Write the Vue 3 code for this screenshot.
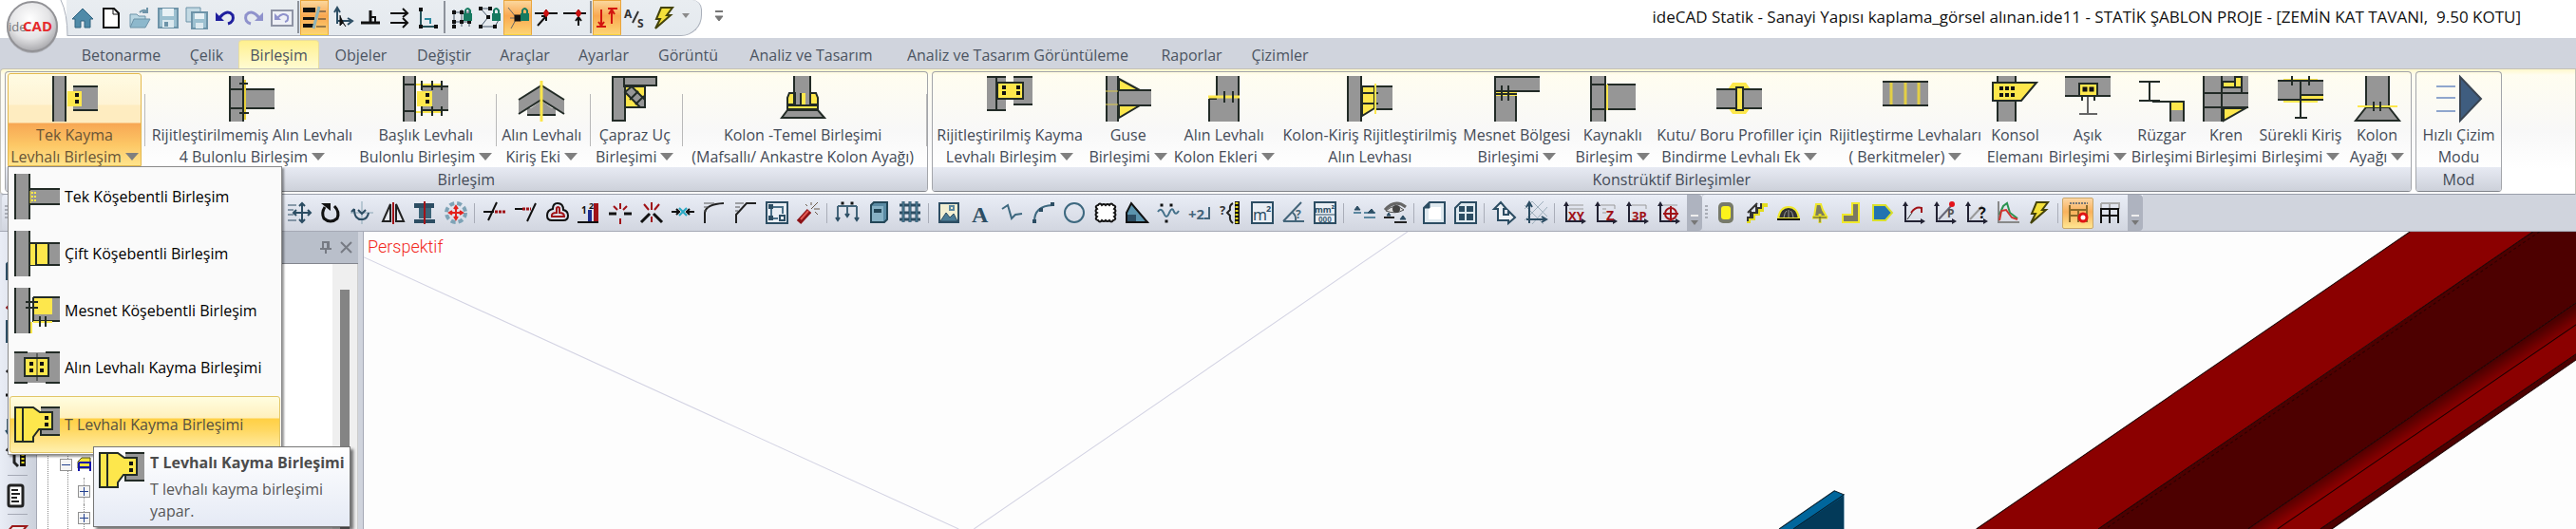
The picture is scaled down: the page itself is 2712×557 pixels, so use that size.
<script setup>
const G = '#969696'
const Y = '#fde74c'
const K = '#222b26'

const rect = (x, y, w, h, f) => `<rect x="${x}" y="${y}" width="${w}" height="${h}" fill="${f}"/>`
const line = (d, c = K, w = 2) => `<path d="${d}" stroke="${c}" stroke-width="${w}" fill="none"/>`
const shape = (d, f, c = K, w = 2) => `<path d="${d}" fill="${f}" stroke="${c}" stroke-width="${w}"/>`
const dots = (pts, s = 4) => pts.map(([x, y]) => rect(x - s / 2, y - s / 2, s, s, '#111')).join('')
const column = (w) => rect(0, 0, w, 48, G) + line(`M1 0V48M${w - 1} 0V48`)

const art = {
  tekKayma: column(15) + rect(22, 10, 26, 27, G) + line('M22 11H48M22 36H48') + rect(16, 16, 15, 16, Y) + dots([[26, 20], [26, 27]]),
  dortBulon: column(16) + rect(16, 14, 32, 20, G) + line('M0 14H48M0 34H48') + line('M17 4V46', '#e6cf3c') + line('M11 8H20M11 39H21'),
  baslik: column(14) + line('M0 9H14M0 37H14') + rect(20, 10, 28, 27, G) + line('M14 9H42M14 38H42', Y) + line('M20 11H48M20 36H48M20 5V15M31 5V15M41 5V15M20 32V42M31 32V42M41 32V42') + rect(15, 16, 16, 16, Y) + dots([[26, 20], [26, 27]]),
  kirisEki: rect(9, 34, 30, 7, G) + `<path d="M0 25L24 10L48 25V40L24 25L0 40Z" fill="${G}"/><path d="M10 36L24 26L38 36Z" fill="${G}"/>` + line('M0 25L24 10L48 25M0 40L24 25L48 40M9 41H39') + line('M24 5V48', Y, 3),
  capraz: shape('M1 1H47V10H14V47H1Z', G) + line('M13 1V12') + shape('M14 11H35V33H14Z', Y) + shape('M14 17L21 11L35 25V33H30Z', G) + line('M19 25L28 16M25 30L34 21'),
  temel: rect(14, 0, 19, 31, G) + shape('M8 30V23L10 18H16V30ZM32 30V18H38L40 23V30Z', Y) + rect(22, 18, 5, 12, Y) + line('M15 0V30M32 0V30M22 18V30') + shape('M8 31H40V35H8Z', Y) + shape('M8 36H40L47 44H2Z', G),
  rijitKayma: rect(0, 0, 20, 37, G) + rect(28, 0, 20, 31, G) + line('M0 1H20M0 36H20M28 1H48M28 30H48M10 0V36') + shape('M11 7H38V24H11Z', Y) + dots([[18, 12], [33, 12], [18, 18], [33, 18]]),
  guse: rect(14, 15, 34, 17, G) + column(14) + shape('M14 3L36 15H14ZM14 31H36L14 44Z', Y) + line('M14 15H48M14 31H48') + line('M0 16H13M0 30H13', '#d9c64a', 1),
  kolonEki: rect(16, 0, 24, 21, G) + rect(8, 23, 32, 25, G) + line('M16 0V21M39 0V48M8 24V48M8 24H16') + line('M7 22H40', Y, 3) + line('M24 16V28M33 16V28'),
  kolonKiris: column(16) + rect(29, 11, 19, 25, G) + shape('M16 11H29V34L16 42Z', Y) + line('M29 11H48M29 35H48M16 18H33M16 29H33') + line('M30 8V40', Y),
  mesnet: rect(0, 0, 48, 16, G) + rect(0, 21, 24, 27, G) + rect(0, 16, 24, 5, Y) + line('M0 1H48M0 16H48M1 0V48M23 21V48M0 19H24M8 10V26M15 10V26'),
  kaynakli: column(17) + rect(18, 9, 30, 27, G) + line('M0 9H16M0 35H16M18 9H48M18 35H48') + line('M18 9V36', Y),
  kutu: `<path d="M12 14L17 7H31L36 14V33L31 40H17L12 33Z" fill="${Y}"/>` + rect(0, 13, 48, 21, G) + line('M0 14H48M0 34H48') + shape('M21 12H28V36H21Z', Y),
  berkitme: rect(0, 6, 48, 25, G) + line('M9 6V30M24 6V30M38 6V30', '#e3cf45', 3) + line('M0 6H48M0 31H48'),
  konsol: rect(6, 0, 19, 48, G) + line('M6 0V48M25 0V48') + shape('M1 7H47L31 26H1Z', Y) + dots([[10, 13], [16, 13], [22, 13], [10, 20], [16, 20], [22, 20]]),
  asik: rect(0, 1, 48, 20, G) + line('M0 1H48M0 21H48') + shape('M15 8H34V21H15Z', Y) + dots([[21, 14], [28, 14]], 5) + line('M18 21V26M31 21V26') + line('M24 22V40M15 40H34', '#666', 2),
  ruzgar: line('M0 6H22M11 6V26M0 26H22M14 27H48') + rect(33, 28, 14, 8, Y) + rect(33, 36, 14, 12, G) + line('M33 27V48M47 27V48'),
  kren: column(21) + rect(21, 0, 27, 33, G) + shape('M21 6H34V12H21Z M34 1H41V12H34Z', Y) + shape('M22 34H45L22 47Z', Y) + line('M0 18H48M0 33H48M41 0V18M1 0V48'),
  surekli: rect(0, 5, 48, 21, G) + rect(24, 20, 24, 5, Y) + line('M6 4H42M6 27H42M24 26V34', Y) + line('M0 5H48M0 25H48M24 20H48M15 0V10M33 0V10M24 5V44M18 44H31'),
  kolonAyagi: rect(12, 0, 24, 32, G) + shape('M12 33H36L47 47H1Z', G) + line('M12 0V32M36 0V32') + line('M3 32H45', Y) + line('M20 27V37M27 27V37'),
  hizli: line('M0 11H20M0 23H20M0 37H20', '#8fa6cd') + shape('M25 1L47 24L25 47Z', '#3f5d7f', '#3a4552'),
  tekKose: column(17) + rect(17, 16, 31, 17, G) + line('M17 16H48M17 32H48') + `<path d="M19 19V30M22 19V30" stroke="${Y}" stroke-width="2" stroke-dasharray="2 2"/>` + line('M17 18V31', Y, 1),
  ciftKose: rect(17, 13, 31, 24, G) + column(17) + line('M17 13H48M17 36H48') + rect(17, 14, 6, 22, Y) + shape('M23 13H36V36H23Z', Y),
  mesnetKose: column(17) + rect(19, 10, 29, 26, G) + rect(19, 10, 21, 18, Y) + line('M20 10H48M20 10V35H48') + line('M18 36V48M20 36H40', Y) + line('M12 15H25M12 21H25M27 30V41M33 30V41'),
  alin: rect(0, 8, 48, 32, G) + line('M0 8H14M33 8H48M0 40H14M33 40H48') + shape('M11 14H36V33H11Z', Y) + line('M24 9V38', K, 1) + dots([[18, 20], [18, 27], [29, 20], [29, 27]]),
  tLevha: rect(28, 5, 20, 31, G) + line('M28 6H48M28 35H48M28 30V36') + shape('M1 6H20L27 11H40V29H26L20 37V42H1Z', Y) + line('M9 6V42') + dots([[34, 17], [34, 24]]),
}

const N = '#2c4d63'
const B = '#6d93a8'
const R = '#a01217'
const axes = line('M3 2V21H22', '#223', 2) + `<path d="M0 5L3 0L6 5ZM19 18L24 21L19 24Z" fill="#223"/>`
const letter = (t, x, y, s, c) => `<text x="${x}" y="${y}" font-size="${s}" font-weight="700" fill="${c}" font-family="Noto Sans, sans-serif">${t}</text>`
const lock = rect(15, 7, 9, 8, '#167a60') + line('M17 7V4Q19 0 22 4V7', '#167a60')

const small = {
  home: shape('M1 13L12 2L23 13H20V22H14V15H10V22H4V13Z', '#4f8aa8', '#30627f', 1),
  page: shape('M4 2H15L20 7V22H4Z', '#fff', '#111') + line('M14 2V8H20', '#111', 1),
  open: shape('M2 8H9L11 10H18V21H2Z', '#b9d6e2', B, 1) + shape('M6 13H23L18 22H2Z', '#8db8cc', B, 1) + line('M12 6Q16 2 20 5M20 1V6H15', B),
  save: shape('M2 2H22V22H2Z', '#9cc0d0', B, 2) + rect(6, 2, 12, 8, '#e8f1f5') + rect(6, 14, 12, 8, '#dce9ef') + rect(8, 16, 4, 5, B),
  saveAll: shape('M1 1H16V16H1Z', '#c4dae4', B, 1) + shape('M7 6H23V23H7Z', '#9cc0d0', B, 2) + rect(10, 7, 10, 6, '#e8f1f5') + rect(11, 17, 8, 6, '#dce9ef'),
  undo: line('M6 12Q14 2 20 9Q22 16 15 18', '#1f1f9e', 3) + `<path d="M2 6V15H11Z" fill="#1f1f9e"/>`,
  redo: line('M18 12Q10 2 4 9Q2 16 9 18', '#8f92cc', 3) + `<path d="M22 6V15H13Z" fill="#8f92cc"/>`,
  undoBox: shape('M1 4H23V20H1Z', '#eef0f6', '#8e93a4', 2) + line('M7 12Q13 5 18 10Q19 15 15 16', '#8f92cc', 2) + `<path d="M4 7V14H11Z" fill="#8f92cc"/>`,
  bars: rect(0, 1, 13, 5, '#111') + rect(0, 11, 12, 3, '#111') + rect(0, 18, 12, 4, '#111') + line('M16 5H24M16 13H24M14 21H24', '#333', 1) + line('M17 0L11 23', '#8fb3b8', 3),
  move3d: line('M6 18V3M6 15H20M3 6L6 1L9 6', N, 2) + shape('M9 9V20L12 17L15 21', '#111', '#111', 1) + line('M17 12L22 15L17 19', N),
  perp: line('M1 17H21M11 17V4', '#111', 3) + line('M11 11H16V17', '#111', 2),
  parallel: line('M2 7H20M2 17H20M15 2L20 7L15 11M15 12L20 17L15 22', '#111', 2),
  ortho: line('M4 2V21H22', '#27545c', 2) + line('M8 13H14V18', '#2d8aa0') + dots([[4, 3], [4, 21], [20, 21]]),
  gridLock: line('M3 6H22M3 16H22M5 3V21M13 3V21M21 3V21', '#456', 1) + dots([[5, 6], [13, 6], [5, 16], [13, 16], [21, 16], [5, 21]]) + lock,
  nodeLock: line('M3 2L13 2M3 2L11 11L3 21H18L22 14', '#456', 1) + dots([[3, 2], [13, 2], [11, 11], [3, 21], [18, 21]]) + lock,
  snapLock: line('M2 1L11 12L5 23M4 12H20', '#666', 1) + dots([[12, 12]], 7) + lock,
  snapEnd: line('M0 7H24M3 20L12 10M7 10H12V15', '#111', 2) + shape('M9 7L12 3L15 7L12 11Z', '#d01010', '#a00', 1),
  snapMid: line('M0 7H24M16 20V12M13 15L16 11L19 15', '#111', 2) + shape('M13 7L16 3L19 7L16 11Z', '#d01010', '#a00', 1),
  levels: line('M6 3V20M1 21H11M17 4V18M13 2H23M3 16L6 20L9 16M14 8L17 3L20 8', '#d3150f', 2),
  as: letter('A', 0, 12, 12, '#333') + letter('S', 14, 22, 12, '#333') + line('M9 17L15 5', '#333'),
  bolt: shape('M9 1H21L15 9H19L3 23L8 13H4Z', '#f4e03a', '#44430a', 2),
  moveLines: line('M0 4H9M0 9H6M0 14H6M0 20H9', N, 1) + line('M15 3V21M7 12H23M12 5L15 2L18 5M12 19L15 22L18 19M9 9L6 12L9 15M21 9L24 12L21 15', N, 2),
  rotate: line('M6 6Q2 12 5 18Q12 24 19 18Q22 11 16 5', '#111', 3) + `<path d="M2 2H12V10Z" fill="#111"/>`,
  rotateCopy: line('M0 12H24M12 0V24', '#8ba7b6', 1) + line('M4 8Q4 20 13 19Q18 18 19 12M4 8L1 11M8 9L12 13L16 9', N, 2),
  mirror: shape('M9 3V21H1ZM15 3V21H23Z', '#e8eaf0', '#222') + line('M12 1V24', R, 2),
  section: rect(1, 2, 21, 5, N) + rect(6, 7, 13, 11, '#3c6478') + rect(1, 19, 22, 4, N) + line('M12 0V24', R, 2),
  radial: `<circle cx="12" cy="12" r="10" fill="none" stroke="#7ea3b6" stroke-width="4" stroke-dasharray="5 3"/>` + line('M12 6V18M6 12H18M10 8L12 5L14 8M10 16L12 19L14 16M8 10L5 12L8 14M16 10L19 12L16 14', '#e3221d', 2),
  trim: line('M0 11H11M5 20L14 1', '#111', 2) + `<path d="M12 11H24" stroke="${R}" stroke-width="3" stroke-dasharray="3 1"/>`,
  extend: line('M0 8H8M13 21L22 2', '#111', 2) + `<path d="M8 8H17" stroke="${R}" stroke-width="3" stroke-dasharray="3 1"/>`,
  offset: line('M7 8Q7 2 12 2Q18 2 18 9Q23 10 23 15Q23 20 18 20H6Q1 20 1 15Q1 9 7 8Z', '#111', 2) + line('M11 12V7Q12 5 14 7V12Q19 12 19 16H6Q5 12 11 12Z', R, 2),
  order: letter('1', 4, 13, 10, '#111') + letter('2', 12, 8, 9, '#111') + rect(11, 9, 4, 12, '#1d2c8e') + rect(17, 2, 5, 19, R) + rect(0, 21, 22, 2, '#111'),
  breakH: line('M0 13H8M16 13H24', '#111', 3) + line('M12 2V8M12 18V24M5 5L9 9M19 5L15 9', R, 2),
  breakX: line('M1 22L10 13M23 22L14 13', '#111', 3) + line('M12 1V9M4 3L9 9M20 3L15 9M12 16V22', R, 2),
  join: line('M0 11H9M15 11H24M5 8L8 11L5 14M19 8L16 11L19 14', '#111', 2) + line('M8 7L16 15M16 7L8 15', '#28a9c4', 2),
  fillet: line('M2 23V12Q3 3 22 2', '#222', 2) + line('M1 2H12M1 6H6M1 10H4', '#555', 1),
  chamfer: line('M2 23V14L13 2H23', '#222', 2) + line('M1 2H10M1 6H6M1 10H4', '#555', 1),
  frame: shape('M1 1H23V23H1Z', '#e9eef4', N) + line('M6 6H18V13M6 6V18H13', '#4b7088', 2) + rect(3, 3, 5, 5, N) + rect(3, 15, 5, 5, N) + line('M15 15H20V20H15Z', N, 2),
  wand: line('M2 22L13 10', '#8c1216', 6) + line('M4 19L12 10', '#e35a54', 2) + line('M15 8L22 1M18 8H24M15 4V1M19 11L22 14M11 5L9 3', '#6a5a4a', 1),
  dims: line('M2 5H22M2 5V20M12 5V16M22 5V20', '#44657a', 2) + dots([[7, 2], [17, 2]], 3) + line('M0 17L2 20L4 17M10 13L12 16L14 13M20 17L22 20L24 17', N, 2),
  book: shape('M4 4L7 1H21V19L18 22H4Z', '#5a8ba4', '#234657') + rect(5, 5, 12, 16, '#86b1c5') + rect(7, 8, 8, 4, '#234657'),
  lattice: line('M5 0V22M12 0V22M19 0V22M1 4H23M1 12H23M1 19H23', N, 3) + line('M5 0V22M12 0V22M19 0V22', '#5b93ae', 1),
  image: shape('M2 2H22V22H2Z', '#f2efd2', N) + shape('M3 21L9 12L13 17L17 13L21 21Z', '#4b7c95', N, 1) + line('M13 5H17V9H13Z', '#5a87a0', 2),
  textA: `<text x="3" y="22" font-size="24" font-weight="700" fill="${N}" font-family="Liberation Serif, serif">A</text>`,
  poly: line('M2 8L8 4L12 18L16 14L23 13', '#3d687f', 2),
  arc: line('M3 21Q3 5 22 4', '#3d687f', 2) + shape('M1 19H5V23H1ZM20 1H24V5H20ZM8 7H12V11H8Z', N, N, 0),
  circle: `<circle cx="12" cy="12" r="10" fill="none" stroke="#3d687f" stroke-width="2"/>`,
  cloud: `<rect x="3" y="5" width="18" height="14" rx="2" fill="#fff"/><path d="M3 8Q0 5 4 4Q6 1 8 4Q10 2 12 4Q14 2 16 4Q18 1 20 4Q24 5 21 8Q24 10 21 12Q24 14 21 16Q24 19 20 20Q18 23 16 20Q14 22 12 20Q10 22 8 20Q6 23 4 20Q0 19 3 16Q0 14 3 12Q0 10 3 8Z" fill="#fff" stroke="#111" stroke-width="2"/>`,
  ramp: shape('M1 12L6 2L23 22H1Z', '#5b94ae', '#111') + rect(2, 14, 9, 7, N) + line('M1 22H24', '#111', 2),
  spline: line('M1 11Q4 6 7 12Q10 20 13 12Q16 5 18 11Q20 15 23 10', '#44708a', 2) + dots([[5, 4], [15, 4], [10, 21]], 3),
  plus2: letter('+2', 0, 19, 15, '#44657a') + line('M22 6V18H17', '#44657a', 2),
  scaleQ: letter('?', 0, 14, 13, '#333') + line('M14 2Q10 4 11 9L8 12L11 15Q10 20 14 23', '#222', 2) + rect(16, 0, 5, 24, '#111') + `<path d="M18 1V23" stroke="#e8d921" stroke-width="3" stroke-dasharray="2 2"/>`,
  m2: shape('M1 1H23V23H1Z', '#e9eef4', N) + `<text x="2" y="20" font-size="16" fill="${N}" font-family="Noto Sans, sans-serif">m</text>` + letter('2', 16, 11, 9, N),
  angle: line('M1 21H23M1 21L20 1M11 12Q15 15 14 21', '#44657a', 2) + letter('?', 14, 18, 12, '#44657a'),
  mm2: shape('M1 1H23V23H1Z', '#e9eef4', N) + letter('mm²', 1, 12, 9, N) + line('M1 14H23', N, 1) + letter('000', 5, 22, 8, '#44657a'),
  level: line('M1 12H9M12 17H24M12 12H16M16 12H24', '#5b87a0', 2) + shape('M2 9L5 5L8 9ZM16 12L20 8L23 12Z', N, N, 1),
  eye: line('M1 9Q12 -3 23 6', '#666', 3) + shape('M2 10Q12 1 21 9Q12 14 2 10Z', '#ddd', '#555', 1) + `<circle cx="13" cy="8" r="4" fill="#444"/>` + line('M0 17H11M11 22H24', '#222', 2) + shape('M3 15L5 12L7 15ZM17 19L20 15L23 19Z', N, N, 1),
  sheet: shape('M7 1H23V23H1V7Z', '#dfe9ef', N) + rect(6, 6, 13, 13, '#fff') + shape('M1 7L7 1V7Z', N, N, 1),
  sheets: shape('M7 1H23V23H1V7Z', '#dfe9ef', N) + rect(5, 5, 6, 6, N) + rect(13, 5, 7, 6, N) + rect(5, 13, 6, 7, N) + rect(13, 13, 7, 7, N),
  upRight: shape('M5 21V8H1L8 1L14 8H11V14H16V10L23 17L16 23V20H5Z', '#eef2f6', N),
  hatch: line('M0 8L8 0M0 20L20 0M8 24L24 6M0 4L20 24M8 0L24 16', '#9fb0bc', 1) + line('M5 23V3M2 19H22M2 6L5 1L8 6M18 16L23 19L18 22', N, 2),
  xy: axes + line('M6 4H21M6 8H21', '#999', 1) + letter('XY', 5, 20, 13, R),
  z: axes + line('M6 4H21V8M8 8H12M8 12H12', '#999', 1) + letter('Z', 12, 20, 14, R),
  p3: axes + line('M6 4H21V8', '#999', 1) + letter('3P', 6, 20, 13, R),
  target: axes + line('M6 4H21', '#999', 1) + `<circle cx="14" cy="13" r="6" fill="none" stroke="${R}" stroke-width="2"/>` + line('M14 5V21M6 13H22', R, 2),
  col: `<rect x="4" y="1" width="16" height="22" rx="5" fill="#777a6a"/><rect x="7" y="5" width="10" height="14" rx="3" fill="#fbf31c"/>`,
  stair: line('M3 23V18H8V13H13V9H17V4H23', '#e3dc1d', 4) + line('M2 21V17H7V12H12V7H16V2M5 16V8M11 11V4M2 12L12 2', '#333', 2),
  dome: `<path d="M1 18Q3 6 12 6Q21 6 23 18Z" fill="#333" stroke="#f0e92a" stroke-width="2"/>` + line('M7 17Q8 11 10 10M12 9V17M17 17Q16 11 14 10', '#999', 1) + line('M0 19H24', '#111', 2),
  bell: `<path d="M6 16L8 3H13L15 9L19 16Z" fill="#7c7c60" stroke="#efe82a" stroke-width="2"/>` + line('M4 17H20M12 13V23', '#e3dc1d', 3) + line('M5 17H19M12 16V22', '#555', 1),
  ell: shape('M13 2H20V22H3V14H13Z', '#7b7963', '#f0e92a', 2),
  tag: shape('M2 4H15L22 12L15 20H2Z', '#2273b0', '#d9e02c', 2),
  chart1: axes + line('M5 19L10 12', '#333', 1) + line('M9 12Q14 5 20 7V12', R, 2),
  chartP: axes + line('M5 19L18 5', '#667', 2) + `<circle cx="19" cy="3" r="3" fill="#e3131b"/>` + letter('P', 14, 17, 12, '#555'),
  chartQ: axes + line('M5 19L18 5', '#999', 2) + letter('?', 14, 18, 16, '#111'),
  plot: line('M2 0V22H24', '#888', 2) + line('M3 14L7 5L11 2L14 12L22 18', '#2b9350', 2) + line('M3 20L5 10L10 9L16 17L22 19', '#d2322e', 2),
  frameStop: `<path d="M3 2H22" stroke="#777" stroke-width="2" stroke-dasharray="2 1"/>` + line('M3 4V22M12 8V22M21 4V22M3 9H21M3 15H21', '#8b6a2a', 2) + `<circle cx="17" cy="17" r="4" fill="#fff" stroke="#e01414" stroke-width="3"/>`,
  frameGrid: line('M3 2H22V8M3 2V8M12 2V8', '#aaa', 2) + line('M3 8V23M12 8V23M21 8V23M2 8H22M2 15H22', '#111', 2),
  magnet: line('M1 6Q6 -2 9 8V18L13 22', '#222', 3) + rect(15, 0, 6, 22, '#111') + `<path d="M18 1V21" stroke="#e8d921" stroke-width="3" stroke-dasharray="2 2"/>`,
  doc: `<rect x="3" y="1" width="15" height="22" rx="2" fill="#fff" stroke="#222" stroke-width="3"/>` + line('M6 6H13M6 10H15M6 14H12M6 18H14', '#222', 2),
  plate: shape('M7 3H22L16 10H1Z', '#eee', '#9b1a1a', 2) + shape('M6 20L12 12L16 20Z', '#4b7c95', N, 1),
}

const quick = ['home', 'page', 'open', 'save', 'saveAll', 'undo', 'redo', 'undoBox', '|', '*bars', 'move3d', 'perp', 'parallel', 'ortho', '|', 'gridLock', 'nodeLock', '*snapLock', 'snapEnd', 'snapMid', '|', '*levels', 'as', 'bolt']
const tools = ['moveLines', 'rotate', 'rotateCopy', 'mirror', 'section', 'radial', '|', 'trim', 'extend', 'offset', 'order', 'breakH', 'breakX', 'join', 'fillet', 'chamfer', 'frame', 'wand', '|', 'dims', 'book', 'lattice', '|', 'image', 'textA', 'poly', 'arc', 'circle', 'cloud', 'ramp', 'spline', 'plus2', 'scaleQ', 'm2', 'angle', 'mm2', '|', 'level', 'eye', '|', 'sheet', 'sheets', '|', 'upRight', 'hatch', '|', 'xy', 'z', 'p3', 'target']
const tools2 = ['col', 'stair', 'dome', 'bell', 'ell', 'tag', 'chart1', 'chartP', 'chartQ', 'plot', 'bolt', '|', '*frameStop', 'frameGrid']
const side = ['sheet', 'wand', 'frame', 'breakX', 'breakH', 'dims', 'magnet', '|', 'doc', '|', 'plate']

const tabs = ['Betonarme', 'Çelik', 'Birleşim', 'Objeler', 'Değiştir', 'Araçlar', 'Ayarlar', 'Görüntü', 'Analiz ve Tasarım', 'Analiz ve Tasarım Görüntüleme', 'Raporlar', 'Çizimler']

const groups = [
  {
    label: 'Birleşim', cls: 'g1',
    items: [
      { i: 'tekKayma', a: 'Tek Kayma', b: 'Levhalı Birleşim', m: 1, on: 1, sep: 1 },
      { i: 'dortBulon', a: 'Rijitleştirilmemiş Alın Levhalı', b: '4 Bulonlu Birleşim', m: 1 },
      { i: 'baslik', a: 'Başlık Levhalı', b: 'Bulonlu Birleşim', m: 1, sep: 1 },
      { i: 'kirisEki', a: 'Alın Levhalı', b: 'Kiriş Eki', m: 1, sep: 1 },
      { i: 'capraz', a: 'Çapraz Uç', b: 'Birleşimi', m: 1, sep: 1 },
      { i: 'temel', a: 'Kolon -Temel Birleşimi', b: '(Mafsallı/ Ankastre Kolon Ayağı)', sep: 1 },
    ],
  },
  {
    label: 'Konstrüktif Birleşimler', cls: 'g2',
    items: [
      { i: 'rijitKayma', a: 'Rijitleştirilmiş Kayma', b: 'Levhalı Birleşim', m: 1 },
      { i: 'guse', a: 'Guse', b: 'Birleşimi', m: 1 },
      { i: 'kolonEki', a: 'Alın Levhalı', b: 'Kolon Ekleri', m: 1 },
      { i: 'kolonKiris', a: 'Kolon-Kiriş Rijitleştirilmiş', b: 'Alın Levhası' },
      { i: 'mesnet', a: 'Mesnet Bölgesi', b: 'Birleşimi', m: 1 },
      { i: 'kaynakli', a: 'Kaynaklı', b: 'Birleşim', m: 1 },
      { i: 'kutu', a: 'Kutu/ Boru Profiller için', b: 'Bindirme Levhalı Ek', m: 1 },
      { i: 'berkitme', a: 'Rijitleştirme Levhaları', b: '( Berkitmeler)', m: 1 },
      { i: 'konsol', a: 'Konsol', b: 'Elemanı' },
      { i: 'asik', a: 'Aşık', b: 'Birleşimi', m: 1 },
      { i: 'ruzgar', a: 'Rüzgar', b: 'Birleşimi' },
      { i: 'kren', a: 'Kren', b: 'Birleşimi' },
      { i: 'surekli', a: 'Sürekli Kiriş', b: 'Birleşimi', m: 1 },
      { i: 'kolonAyagi', a: 'Kolon', b: 'Ayağı', m: 1 },
    ],
  },
  { label: 'Mod', cls: 'g3', items: [{ i: 'hizli', a: 'Hızlı Çizim', b: 'Modu' }] },
]

const menu = [
  ['tekKose', 'Tek Köşebentli Birleşim'],
  ['ciftKose', 'Çift Köşebentli Birleşim'],
  ['mesnetKose', 'Mesnet Köşebentli Birleşim'],
  ['alin', 'Alın Levhalı Kayma Birleşimi'],
  ['tLevha', 'T Levhalı Kayma Birleşimi'],
]

const name = (t) => t.replace('*', '')
</script>

<template>
  <div class="app">
    <header class="titlebar">
      <button class="orb" aria-label="ideCAD">
        <svg width="74" height="60" viewBox="0 0 74 60">
          <defs>
            <radialGradient id="orb" cx="45%" cy="35%" r="65%">
              <stop offset="0" stop-color="#ffffff" />
              <stop offset="0.6" stop-color="#e4e4e6" />
              <stop offset="1" stop-color="#a9a9ad" />
            </radialGradient>
          </defs>
          <path d="M0 0H64Q71 14 71 37V40H0Z" fill="#fff" />
          <path d="M64 0Q71 14 71 38" fill="none" stroke="#a9afba" />
          <circle cx="34" cy="29" r="27" fill="#8a8a8e" opacity="0.5" />
          <circle cx="34" cy="28" r="26" fill="url(#orb)" stroke="#929296" stroke-width="2" />
          <text x="9" y="33" font-size="13" fill="#77777b">ide</text>
          <text x="24" y="33" font-size="15" font-weight="700" fill="#e52a2c">CAD</text>
        </svg>
      </button>
      <div class="quick">
        <template v-for="(q, n) in quick" :key="n">
          <span v-if="q === '|'" class="qsep"></span>
          <button v-else :class="['qbtn', { on: q[0] === '*' }]" :aria-label="name(q)">
            <svg width="24" height="24" viewBox="0 0 24 24" v-html="small[name(q)]"></svg>
          </button>
        </template>
        <button class="qmore" aria-label="more"><svg width="8" height="5" viewBox="0 0 8 5"><path d="M0 0H8L4 5Z" fill="#8a8a8a" /></svg></button>
      </div>
      <button class="customize" aria-label="customize">
        <svg width="10" height="12" viewBox="0 0 10 12"><path d="M1 1H9" stroke="#777" stroke-width="2" /><path d="M1 6H9L5 11Z" fill="#777" stroke="#777" /></svg>
      </button>
      <h1>ideCAD Statik - Sanayi Yapısı kaplama_görsel alınan.ide11 - STATİK ŞABLON PROJE - [ZEMİN KAT TAVANI,&nbsp; 9.50 KOTU]</h1>
    </header>

    <nav class="tabs">
      <button v-for="t in tabs" :key="t" :class="{ active: t === 'Birleşim' }">{{ t }}</button>
    </nav>

    <section class="ribbon">
      <div v-for="g in groups" :key="g.label" :class="['group', g.cls]">
        <div class="items">
          <div v-for="it in g.items" :key="it.i" :class="['cell', { sep: it.sep, open: it.on }]">
            <button :class="['item', { on: it.on }]">
              <svg width="48" height="48" viewBox="0 0 48 48" v-html="art[it.i]"></svg>
              <span>{{ it.a }}</span>
              <span>{{ it.b }}<i v-if="it.m" class="arrow"></i></span>
            </button>
            <div v-if="it.on" class="menu">
              <button v-for="m in menu" :key="m[0]" :class="{ hot: m[0] === 'tLevha' }">
                <svg width="48" height="48" viewBox="0 0 48 48" v-html="art[m[0]]"></svg>
                <span>{{ m[1] }}</span>
              </button>
              <div class="tip">
                <svg width="48" height="48" viewBox="0 0 48 48" v-html="art.tLevha"></svg>
                <div>
                  <strong>T Levhalı Kayma Birleşimi</strong>
                  <p>T levhalı kayma birleşimi yapar.</p>
                </div>
              </div>
            </div>
          </div>
        </div>
        <div class="glabel">{{ g.label }}</div>
      </div>
    </section>

    <div class="toolbars">
      <div class="strip first">
        <span class="grip"></span>
        <template v-for="(q, n) in tools" :key="n">
          <span v-if="q === '|'" class="tsep"></span>
          <button v-else class="tbtn" :aria-label="name(q)">
            <svg width="24" height="24" viewBox="0 0 24 24" v-html="small[name(q)]"></svg>
          </button>
        </template>
        <button class="overflow" aria-label="overflow"><svg width="10" height="12" viewBox="0 0 10 12"><path d="M1 1H9" stroke="#eee" stroke-width="2" /><path d="M1 6H9L5 11Z" fill="#777" /></svg></button>
      </div>
      <div class="strip">
        <span class="grip"></span>
        <template v-for="(q, n) in tools2" :key="n">
          <span v-if="q === '|'" class="tsep"></span>
          <button v-else :class="['tbtn', { on: q[0] === '*' }]" :aria-label="name(q)">
            <svg width="24" height="24" viewBox="0 0 24 24" v-html="small[name(q)]"></svg>
          </button>
        </template>
        <button class="overflow" aria-label="overflow"><svg width="10" height="12" viewBox="0 0 10 12"><path d="M1 1H9" stroke="#eee" stroke-width="2" /><path d="M1 6H9L5 11Z" fill="#777" /></svg></button>
      </div>
    </div>

    <main class="body">
      <div class="side">
        <template v-for="(q, n) in side" :key="n">
          <span v-if="q === '|'" class="hsep"></span>
          <button v-else :aria-label="name(q)"><svg width="24" height="24" viewBox="0 0 24 24" v-html="small[q]"></svg></button>
        </template>
      </div>
      <aside class="panel">
        <div class="phead">
          <button aria-label="pin"><svg width="12" height="14" viewBox="0 0 12 14"><path d="M3 1H9V8H3ZM0 8H12M6 8V13M8 1V8" stroke="#777b84" stroke-width="2" fill="none" /></svg></button>
          <button aria-label="close"><svg width="13" height="13" viewBox="0 0 13 13"><path d="M1 1L12 12M12 1L1 12" stroke="#777b84" stroke-width="2" /></svg></button>
        </div>
        <div class="pbody">
          <ul class="tree">
            <li>
              <button class="node" aria-label="collapse"><svg width="11" height="11" viewBox="0 0 11 11"><path d="M1 5H10V6H1Z" fill="#23418f" /></svg></button>
              <svg width="16" height="16" viewBox="0 0 16 16"><path d="M1 5L5 1H14V12H1Z" fill="#f1e23c" stroke="#55531a" /><path d="M2 6H14V15M2 6V15M2 11H14" stroke="#1414a8" stroke-width="2" fill="none" /></svg>
            </li>
            <li v-for="c in 2" :key="c" class="child">
              <button class="node" aria-label="expand"><svg width="11" height="11" viewBox="0 0 11 11"><path d="M1 5H10V6H1ZM5 1H6V10H5Z" fill="#23418f" /></svg></button>
            </li>
          </ul>
          <div class="scroll"><div class="thumb"></div></div>
        </div>
      </aside>
      <section class="view">
        <svg class="scene" viewBox="383 245 2329 312" preserveAspectRatio="xMidYMin slice">
          <defs>
            <linearGradient id="fade" gradientUnits="userSpaceOnUse" x1="2538" y1="437" x2="2548" y2="452">
              <stop offset="0" stop-color="#4d0000" />
              <stop offset="1" stop-color="#8b0000" />
            </linearGradient>
          </defs>
          <path d="M383 270L1011 557M1027 557L1482 245" stroke="#d3d3e3" fill="none" />
          <path d="M2534 245H2663L2207 557H2079Z" fill="#8b0000" />
          <path d="M2663 245H2712V317L2364 557H2207Z" fill="#4d0000" />
          <path d="M2712 317V371L2440 557H2364Z" fill="url(#fade)" />
          <path d="M2712 371V377L2452 557H2440Z" fill="#4d0000" />
          <path d="M2534 245L2079 557M2663 245L2207 557M2712 317L2364 557M2712 340L2395 557M2712 371L2440 557M2712 377L2452 557" stroke="#1c0000" fill="none" />
          <path d="M2670 245L2214 557" stroke="#2a0000" stroke-dasharray="3 3" fill="none" />
          <path d="M1872 557L1930 517L1940 521V557Z" fill="#00669c" />
          <path d="M1888 557L1940 522V557Z" fill="#033a59" />
          <path d="M1872 557L1930 517L1940 521L1887 557" stroke="#061c2a" fill="none" />
        </svg>
        <span class="vname">Perspektif</span>
      </section>
    </main>
  </div>
</template>

<style>
html, body { margin: 0; }
body { overflow: hidden; }
</style>

<style scoped>
.app {
  height: 100vh;
  display: flex;
  flex-direction: column;
  overflow: hidden;
  background: #d0d4dd;
  color: #444b57;
  font-family: "Open Sans", "Noto Sans", sans-serif;
  font-size: 16px;
}
.app *, .app { box-sizing: border-box; }
button {
  border: 0;
  padding: 0;
  margin: 0;
  background: none;
  font: inherit;
  color: inherit;
  display: flex;
  align-items: center;
  justify-content: center;
}
svg { display: block; flex: none; overflow: visible; }

.titlebar {
  position: relative;
  display: flex;
  flex: none;
  height: 40px;
  padding-left: 70px;
  background: #fff;
}
.orb { position: absolute; left: 0; top: 0; z-index: 2; }
.quick {
  display: flex;
  height: 38px;
  padding: 0 8px 0 2px;
  background: linear-gradient(#e9edf1, #e4e9ee);
  border-bottom: 1px solid #a9afba;
  border-right: 1px solid #a9afba;
  border-radius: 0 10px 22px 0;
}
.qbtn { width: 30px; height: 37px; border: 1px solid transparent; }
.qbtn.on { background: linear-gradient(#fbd79d, #f9a851 45%, #fdd473); border-color: #e9a53c; border-bottom-color: #fbd33d; }
.qsep { width: 2px; height: 34px; margin: 1px; background: #8d929b; }
.qmore { width: 16px; height: 32px; }
.customize { width: 12px; height: 34px; margin-left: 12px; }
h1 {
  margin: 0 58px 0 auto;
  font-size: 17px;
  font-weight: 400;
  line-height: 36px;
  color: #111;
  white-space: nowrap;
}

.tabs {
  flex: none;
  display: grid;
  grid-template-columns: 113px 67px 85px 88px 87px 83px 83px 95px 164px 271px 95px 91px;
  height: 32px;
  padding-left: 71px;
  background: #d0d4dd;
}
.tabs button { white-space: nowrap; padding-top: 3px; color: #4c5462; }
.tabs .active {
  margin-top: 2px;
  padding-top: 1px;
  background: linear-gradient(#fff08e, #fffbd2);
  border: 1px solid #e8dda0;
  border-bottom: 0;
  border-radius: 4px 4px 0 0;
}

.ribbon {
  flex: none;
  display: grid;
  grid-template-columns: 972fr 1559fr 91fr;
  gap: 4px;
  padding: 2px 77px 2px 4px;
  border: 1px solid #c4c2b8;
  border-bottom-color: #9a9faa;
  border-radius: 4px 0 0 4px;
  background: linear-gradient(#fff8cc, #fffdf0 6px, #f8f8f8 50%, #fff 80%);
}
.group { min-width: 0; border: 1px solid #a3a5aa; border-bottom-color: #80838a; border-radius: 4px; }
.items { display: grid; height: 100px; }
.g1 .items { grid-template-columns: minmax(0, 147fr) minmax(0, 225fr) minmax(0, 145fr) minmax(0, 99fr) minmax(0, 97fr) minmax(0, 257fr); }
.g2 .items { grid-template-columns: minmax(0, 163fr) minmax(0, 86fr) minmax(0, 116fr) minmax(0, 191fr) minmax(0, 118fr) minmax(0, 84fr) minmax(0, 183fr) minmax(0, 166fr) minmax(0, 65fr) minmax(0, 88fr) minmax(0, 68fr) minmax(0, 67fr) minmax(0, 90fr) minmax(0, 71fr); }
.cell { position: relative; display: flex; justify-content: center; padding-top: 1px; }
.sep { padding-right: 4px; }
.sep.open { justify-content: flex-start; padding: 1px 0 0 2px; }
.sep::after { content: ""; position: absolute; right: 0; top: 23px; width: 1px; height: 55px; background: #b9b9b9; }
.item {
  flex: none;
  flex-direction: column;
  justify-content: flex-start;
  padding-top: 3px;
  line-height: 23px;
  white-space: nowrap;
}
.item svg { margin-bottom: 3px; }
.item span { display: block; }
.item.on {
  width: 141px;
  height: 98px;
  padding-top: 2px;
  border: 1px solid #e3b94e;
  border-radius: 3px 3px 0 0;
  background: linear-gradient(#fffbe2, #fef3d4 32px, #feecc0 33px, #feecc0 51px, #f7a754 52px, #fdc866 75px, #ffe48c);
  color: #6a5536;
}
.arrow {
  display: inline-block;
  margin-left: 4px;
  vertical-align: 2px;
  border: 7px solid transparent;
  border-top: 8px solid #7f7f7f;
  border-bottom: 0;
}
.glabel {
  height: 25px;
  line-height: 27px;
  text-align: center;
  background: linear-gradient(#e7eaf3, #cdd1da);
  border-radius: 0 0 3px 3px;
}

.menu {
  position: absolute;
  z-index: 5;
  left: 2px;
  top: 99px;
  width: 289px;
  padding: 1px;
  background: #fafafa;
  border: 1px solid #8b8b8b;
  box-shadow: 2px 2px 2px #0006;
}
.menu button {
  width: 100%;
  height: 60px;
  justify-content: flex-start;
  gap: 5px;
  padding-left: 4px;
  border: 1px solid transparent;
  border-radius: 3px;
  color: #000;
  white-space: nowrap;
}
.menu .hot {
  border-color: #e2c667;
  background: linear-gradient(#fffde0, #fff0bd 22px, #ffd044 23px, #ffd862 60%, #fff0ae);
  color: #55503f;
}
.tip {
  position: absolute;
  left: 89px;
  top: 294px;
  display: flex;
  gap: 6px;
  width: 271px;
  height: 85px;
  padding: 0 5px;
  background: linear-gradient(#fff, #e5eaf5);
  border: 1px solid #767676;
  box-shadow: 3px 3px 3px #0008;
  color: #4c4c4c;
}
.tip strong { display: block; line-height: 22px; margin-top: 5px; white-space: nowrap; font-size: 16px; }
.tip p { margin: 6px 0 0; line-height: 23px; color: #575757; }

.toolbars {
  flex: none;
  display: flex;
  height: 39px;
  border-bottom: 1px solid #a5a9b5;
  background: #d0d4dd;
}
.strip {
  display: flex;
  align-items: center;
  height: 38px;
  background: linear-gradient(#e9edf6, #d2d6e0);
  border-radius: 4px 0 0 4px;
}
.first { margin-left: 2px; }
.first .grip { margin-right: 290px; }
.grip { width: 3px; height: 16px; margin-left: 3px; background: repeating-linear-gradient(#a9adb6 0 2px, transparent 2px 4px); }
.tbtn { width: 33px; height: 33px; }
.strip:not(.first) .tbtn:nth-child(2) { margin-left: 2px; }
.tbtn.on { border: 1px solid #c9a76a; border-radius: 2px; background: linear-gradient(#fcd6a4, #f9b15c 45%, #ffe590); }
.tsep { width: 1px; height: 21px; margin: 0 4px 0 3px; background: #a9adb8; }
.overflow {
  align-self: stretch;
  width: 16px;
  margin-left: 3px;
  padding-top: 16px;
  background: #aeb3bf;
  border-radius: 0 4px 4px 0;
}

.body { flex: 1; min-height: 0; display: flex; }
.side {
  flex: none;
  width: 39px;
  padding: 22px 4px 0 1px;
  overflow: hidden;
  background: linear-gradient(90deg, #e9edf6, #ccd1db);
  border-right: 1px solid #a5a9b5;
}
.side button { width: 33px; height: 33px; }
.hsep { display: block; width: 21px; height: 1px; margin: 3px 0 4px 7px; background: #a5a9b5; }
.panel { flex: none; display: flex; flex-direction: column; width: 338px; }
.phead {
  display: flex;
  flex: none;
  justify-content: flex-end;
  align-items: center;
  gap: 9px;
  height: 34px;
  padding-right: 6px;
  background: #b9bfca;
  border-bottom: 1px solid #83868e;
}
.pbody { flex: 1; min-height: 0; display: flex; background: #fff; }
.tree { position: relative; flex: 1; margin: 0; padding: 197px 0 0 24px; list-style: none; overflow: hidden; }
.tree::before { content: ""; position: absolute; left: 11px; top: 0; bottom: 0; width: 20px; border: 1px dotted #888; border-width: 0 1px; }
.tree li { position: relative; display: flex; align-items: center; gap: 5px; height: 28px; }
.tree .child { padding-left: 19px; }
.child::before { content: ""; position: absolute; left: 25px; top: 0; bottom: 0; border-left: 1px dotted #888; }
.node {
  position: relative;
  width: 13px;
  height: 13px;
  border: 1px solid #919191;
  background: #f4f4f4;
}
.scroll { flex: none; width: 27px; padding: 27px 8px 0; background: #efefef; border-right: 1px solid #ccc; }
.thumb { height: 100%; background: #848484; }
.view {
  position: relative;
  flex: 1;
  margin-left: 5px;
  border-left: 1px solid #a5a9b5;
  background: #fdfdfd;
  overflow: hidden;
}
.scene { position: absolute; inset: 0; width: 100%; height: 100%; overflow: hidden; }
.vname {
  position: relative;
  display: block;
  padding: 4px 0 0 4px;
  line-height: 24px;
  font-family: Roboto, sans-serif;
  font-size: 18px;
  font-weight: 300;
  color: #f2281c;
}
</style>
